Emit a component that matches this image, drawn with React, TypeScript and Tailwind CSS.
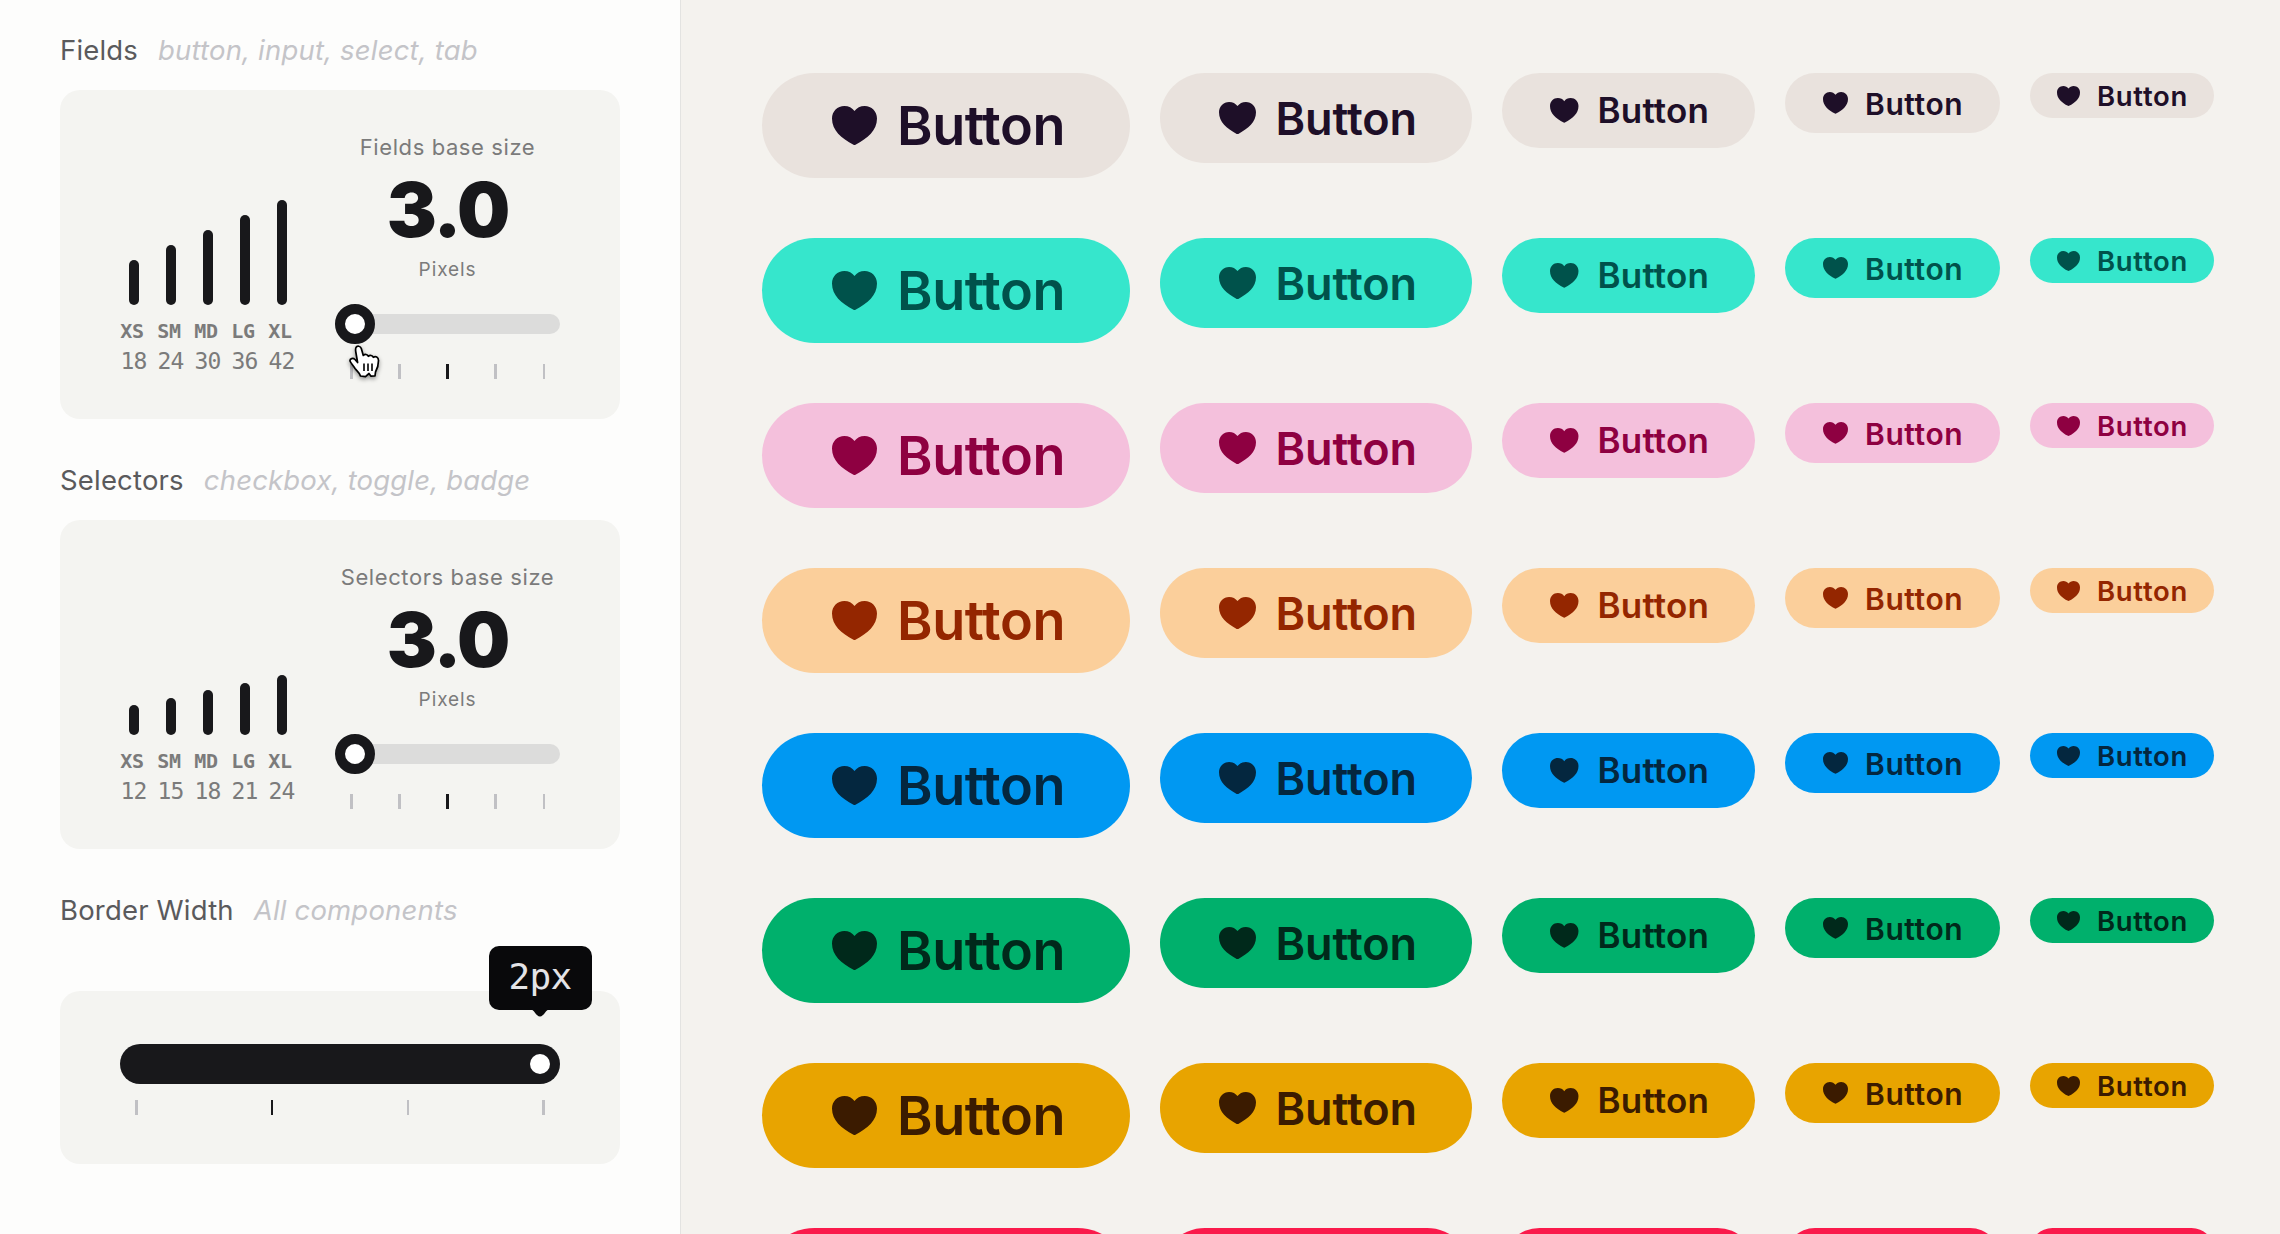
import React from "react";

type Size = { box: string; heart: string; label: string };

const sizes: Size[] = [
  { box: "h-[105px] w-[368px] pl-[70px] gap-[20px]", heart: "w-[45px]", label: "text-[54px] leading-none tracking-[-0.4px]" },
  { box: "h-[90px] w-[312px] pl-[59px] gap-[19.5px]", heart: "w-[37px]", label: "mt-[1px] text-[45px] leading-none tracking-[-0.1px]" },
  { box: "h-[75px] w-[253px] pl-[48px] gap-[19px]", heart: "w-[28.5px]", label: "text-[35px] font-[640] leading-none tracking-[0.2px]" },
  { box: "h-[60px] w-[215px] pl-[37.5px] gap-[17.5px]", heart: "w-[25px]", label: "mt-[2px] text-[30px] font-[640] leading-none tracking-[0.6px]" },
  { box: "h-[45px] w-[184px] pl-[27px] gap-[17px]", heart: "w-[23px]", label: "mt-[2px] text-[27.5px] font-[640] leading-none tracking-[0.7px]" },
];

const themes = [
  "bg-[#e9e2dd] text-[#1e0f28]",
  "bg-[#36e6cc] text-[#00524b]",
  "bg-[#f4c0dc] text-[#8e0041]",
  "bg-[#fbcf9b] text-[#942600]",
  "bg-[#0098f2] text-[#04273f]",
  "bg-[#00b06c] text-[#00291b]",
  "bg-[#e8a400] text-[#3b1b00]",
  "bg-[#fa1a4b] text-[#4d0218]",
];

function Heart({ className }: { className: string }) {
  return (
    <svg viewBox="0 0 46 40" fill="currentColor" className={`shrink-0 ${className}`}>
      <path d="M12.6 0C5.6 0 0 5.5 0 12.8C0 25 9.5 33 22 39.7Q23 40.200 24 39.7C36.500 33 46 25 46 12.800C46 5.500 40.400 0 33.400 0C29 0 25.300 2 23 5.100C20.700 2 17 0 12.600 0Z" />
    </svg>
  );
}

function Title({ name, hint }: { name: string; hint: string }) {
  return (
    <h2 className="flex h-[43px] items-center gap-5 text-[27.5px] tracking-[0.18px] whitespace-nowrap text-[#5a5a5c]">
      {name}
      <em className="text-[#c4c4c8]">{hint}</em>
    </h2>
  );
}

function Ticks({ count, active, className }: { count: number; active: number; className: string }) {
  return (
    <div className={`flex justify-between ${className}`}>
      {Array.from({ length: count }, (_, i) => (
        <span key={i} className={`h-[15px] w-[2.500px] ${i === active ? "bg-[#18181b]" : "bg-[#c0c0c4]"}`} />
      ))}
    </div>
  );
}

function SizeCard({ title, bars, cursor }: { title: string; bars: number[]; cursor?: boolean }) {
  const names = ["XS", "SM", "MD", "LG", "XL"];
  return (
    <div className="flex h-[328.5px] w-[560px] rounded-[20px] bg-[#f4f4f1] pl-[55.5px]">
      <div className="flex w-[190px] items-end pb-[42.5px]">
        {bars.map((v, i) => (
          <div key={v} className="flex w-[37px] shrink-0 flex-col items-center font-['DejaVu_Sans_Mono',monospace] text-[#7b7b7b]">
            <span className="w-[10px] rounded-full bg-[#18181b]" style={{ height: v * 2.5 }} />
            <span className="mt-[10.5px] h-[30px] pr-[4px] text-[20px] leading-[30px] font-bold tracking-[-0.3px]">{names[i]}</span>
            <span className="h-[30.5px] pr-px text-[23px] leading-[31px] tracking-[-0.8px]">{v}</span>
          </div>
        ))}
      </div>
      <div className="ml-[29.5px] flex w-[225px] flex-col items-center pt-[41px] text-[#7b7b7b]">
        <span className="text-[22px] leading-[32px] tracking-[0.600px] whitespace-nowrap">{title}</span>
        <span className="mt-[9px] text-[75px] leading-[76px] font-black tracking-[-2px] text-[#18181b]">3.0</span>
        <span className="mt-[8px] text-[19px] leading-[28px] tracking-[0.900px]">Pixels</span>
        <div className="relative mt-[30px] h-[20px] w-full rounded-full bg-[#dcdcdb]">
          <div className="absolute -top-[10px] left-0 size-[40px] rounded-full border-[10px] border-[#18181b] bg-white" />
          {cursor && (
            <svg viewBox="0 0 31 35" className="absolute top-[31px] left-[14px] z-10 h-[35px] w-[31px] drop-shadow-[0_2px_2px_rgba(0,0,0,0.4)]">
              <path d="M7 2.500C8 .5 11.500 .8 12.300 3.500L14.300 10.500C16 8.800 18.500 9.300 19.300 11.300C21 9.800 23.500 10.300 24.300 12.300C26.500 10.800 29.500 12 29.500 15.500C29.500 21 28.500 23.500 26.500 27L26 31L22 31.200L20 28.500L16.500 31.700L11.500 31C10.500 27.500 8 26 6 23.500C4.500 20.500 2 18.500 1 16C.7 13.500 4 12.500 6 14.500L8.600 17.500L6.800 7C6.500 5 6.300 4 7 2.500Z" fill="white" stroke="black" strokeWidth="1.700" strokeLinejoin="round" />
              <path d="M15 18.500V26M19 18.500V26M23 18.500V26" stroke="black" strokeWidth="1.600" />
            </svg>
          )}
        </div>
        <Ticks count={5} active={2} className="mt-[30px] w-[195px]" />
      </div>
    </div>
  );
}

export default function App() {
  return (
    <div className="flex h-[1234px] w-[2280px] overflow-hidden bg-[#f4f2ee] font-['Inter',sans-serif]">
      <aside className="w-[681px] shrink-0 border-r border-[#e3e3e1] bg-[#fdfdfc] pt-[29px] pl-[60px]">
        <Title name="Fields" hint="button, input, select, tab" />
        <div className="mt-[18px]">
          <SizeCard title="Fields base size" bars={[18, 24, 30, 36, 42]} cursor />
        </div>
        <div className="mt-[40.5px]">
          <Title name="Selectors" hint="checkbox, toggle, badge" />
        </div>
        <div className="mt-[18px]">
          <SizeCard title="Selectors base size" bars={[12, 15, 18, 21, 24]} />
        </div>
        <div className="mt-[40.5px]">
          <Title name="Border Width" hint="All components" />
        </div>
        <div className="mt-[59px] h-[173px] w-[560px] rounded-[20px] bg-[#f4f4f1] px-[60px] pt-[53px]">
          <div className="relative h-[40px] rounded-full bg-[#18181b]">
            <div className="absolute top-[10px] right-[10px] size-[20px] rounded-full bg-white" />
            <div className="absolute -top-[98px] -right-[31.5px] flex h-[64px] w-[103px] items-center justify-center rounded-[10px] bg-[#09090b] pb-[3px] font-['DejaVu_Sans_Mono',monospace] text-[36px] tracking-[-0.6px] text-[#e4e4e7]">
              2px
              <svg viewBox="0 0 20 8" className="absolute top-[63px] left-[41px] h-[8px] w-[20px]">
                <path d="M0 0H20C16 0 14 7.500 10 7.500C6 7.500 4 0 0 0Z" fill="#09090b" />
              </svg>
            </div>
          </div>
          <Ticks count={4} active={1} className="mx-[15px] mt-[16px]" />
        </div>
      </aside>
      <main className="flex flex-col gap-[60px] pt-[73px] pl-[81px]">
        {themes.map((theme) => (
          <div key={theme} className="flex h-[105px] shrink-0 items-start gap-[30px]">
            {sizes.map((s) => (
              <button key={s.box} className={`flex shrink-0 items-center rounded-full font-semibold ${s.box} ${theme}`}>
                <Heart className={s.heart} />
                <span className={s.label}>Button</span>
              </button>
            ))}
          </div>
        ))}
      </main>
    </div>
  );
}
